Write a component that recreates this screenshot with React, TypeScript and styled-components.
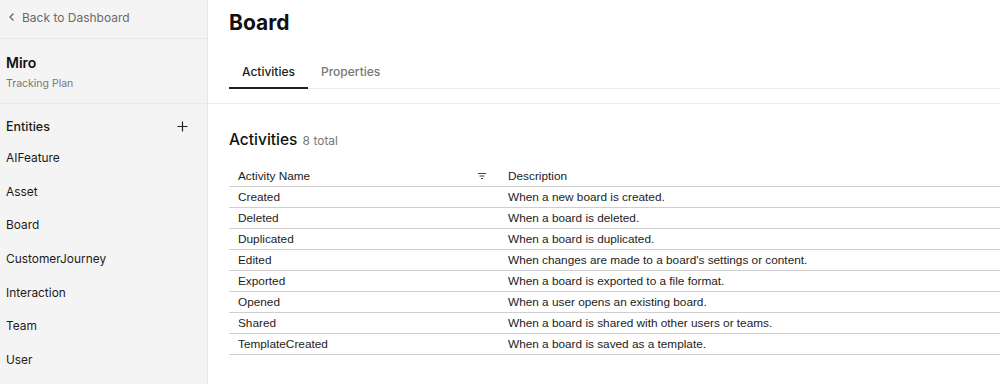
import { createGlobalStyle } from 'styled-components';
import styled from 'styled-components';

const entities = ['AIFeature', 'Asset', 'Board', 'CustomerJourney', 'Interaction', 'Team', 'User'];

const activities = [
    { name: 'Created', description: 'When a new board is created.' },
    { name: 'Deleted', description: 'When a board is deleted.' },
    { name: 'Duplicated', description: 'When a board is duplicated.' },
    { name: 'Edited', description: "When changes are made to a board's settings or content." },
    { name: 'Exported', description: 'When a board is exported to a file format.' },
    { name: 'Opened', description: 'When a user opens an existing board.' },
    { name: 'Shared', description: 'When a board is shared with other users or teams.' },
    { name: 'TemplateCreated', description: 'When a board is saved as a template.' },
];

const App = () => {
    return (
        <>
            <GlobalStyle />
            <Page>
                <Sidebar>
                    <BackLink>
                        <svg width="8" height="10" viewBox="0 0 8 10">
                            <path d="M5.5 1.5 L2 5 L5.5 8.5" fill="none" stroke="#666" strokeWidth="1.3" />
                        </svg>
                        Back to Dashboard
                    </BackLink>
                    <Project>
                        <ProjectName>Miro</ProjectName>
                        <ProjectType>Tracking Plan</ProjectType>
                    </Project>
                    <SectionHeader>
                        Entities
                        <svg width="11" height="11" viewBox="0 0 11 11">
                            <path d="M5.5 0.5 V10.5 M0.5 5.5 H10.5" stroke="#222" strokeWidth="1.2" />
                        </svg>
                    </SectionHeader>
                    <EntityList>
                        {entities.map((entity) => (
                            <EntityItem key={entity}>{entity}</EntityItem>
                        ))}
                    </EntityList>
                </Sidebar>

                <Main>
                    <Header>
                        <Title>Board</Title>
                        <Tabs>
                            <Tab $active>Activities</Tab>
                            <Tab>Properties</Tab>
                        </Tabs>
                    </Header>

                    <Content>
                        <SectionTitle>
                            Activities <Count>8 total</Count>
                        </SectionTitle>
                        <Table>
                            <thead>
                                <tr>
                                    <HeadCell $first>
                                        <HeadInner>
                                            Activity Name
                                            <svg width="10" height="8" viewBox="0 0 10 8">
                                                <path d="M1 1.5 H9 M2.5 4 H7.5 M4 6.5 H6" stroke="#444" strokeWidth="1.1" />
                                            </svg>
                                        </HeadInner>
                                    </HeadCell>
                                    <HeadCell>Description</HeadCell>
                                </tr>
                            </thead>
                            <tbody>
                                {activities.map((activity) => (
                                    <tr key={activity.name}>
                                        <Cell>{activity.name}</Cell>
                                        <Cell>{activity.description}</Cell>
                                    </tr>
                                ))}
                            </tbody>
                        </Table>
                    </Content>
                </Main>
            </Page>
        </>
    )
}

const GlobalStyle = createGlobalStyle`
    html, body {
        margin: 0;
        padding: 0;
        background: #ffffff;
    }
    body {
        font-family: Inter, "Noto Sans", sans-serif;
        color: #1c1c1c;
    }
`

const Page = styled.div`
    display: flex;
    width: 1000px;
    height: 384px;
    overflow: hidden;
`

const Sidebar = styled.aside`
    display: flex;
    flex-direction: column;
    width: 207px;
    flex-shrink: 0;
    background-color: #f4f4f4;
    border-right: 1px solid #e6e6e6;
`

const BackLink = styled.div`
    display: flex;
    align-items: center;
    gap: 6px;
    height: 39px;
    padding: 0 0 4px 8px;
    box-sizing: border-box;
    font-size: 12px;
    color: #6a6a6a;
    border-bottom: 1px solid #e8e8e8;
`

const Project = styled.div`
    display: flex;
    flex-direction: column;
    height: 65px;
    box-sizing: border-box;
    padding: 15px 6px 0;
    border-bottom: 1px solid #e8e8e8;
`

const ProjectName = styled.div`
    font-size: 14px;
    font-weight: 600;
    line-height: 18px;
    color: #111;
`

const ProjectType = styled.div`
    margin-top: 5px;
    font-size: 10.5px;
    line-height: 14px;
    color: #777;
`

const SectionHeader = styled.div`
    display: flex;
    align-items: center;
    justify-content: space-between;
    padding: 8px 19px 0 6px;
    height: 37px;
    box-sizing: border-box;
    font-size: 12.5px;
    font-weight: 500;
    line-height: 16px;
    color: #1c1c1c;
`

const EntityList = styled.div`
    display: flex;
    flex-direction: column;
`

const EntityItem = styled.div`
    height: 33.7px;
    line-height: 33.7px;
    padding-left: 6px;
    font-size: 11.9px;
    color: #1c1c1c;
`

const Main = styled.main`
    display: flex;
    flex-direction: column;
    flex: 1;
    min-width: 0;
`

const Header = styled.div`
    padding: 10px 0 14px 21px;
    border-bottom: 1px solid #ececec;
`

const Title = styled.h1`
    margin: 0;
    font-size: 21px;
    font-weight: 700;
    line-height: 26px;
    color: #111;
`

const Tabs = styled.div`
    display: flex;
    margin-top: 20px;
    border-bottom: 1px solid #ececec;
`

const Tab = styled.div<{ $active?: boolean }>`
    padding: 0 13px;
    height: 31px;
    line-height: 31px;
    margin-bottom: -1px;
    font-size: 12px;
    font-weight: 500;
    color: ${(props) => (props.$active ? '#1c1c1c' : '#777')};
    border-bottom: 2px solid ${(props) => (props.$active ? '#222' : 'transparent')};
`

const Content = styled.div`
    padding: 26px 0 0 21px;
`

const SectionTitle = styled.h2`
    margin: 0 0 15px;
    font-size: 15.5px;
    font-weight: 500;
    line-height: 20px;
    color: #111;
`

const Count = styled.span`
    margin-left: 1px;
    font-size: 12px;
    font-weight: 400;
    color: #777;
`

const Table = styled.table`
    width: 100%;
    border-collapse: collapse;
    font-family: "Liberation Sans", Arial, sans-serif;
    font-size: 11.8px;
    color: #1c1c1c;
`

const HeadCell = styled.th<{ $first?: boolean }>`
    width: ${(props) => (props.$first ? '249px' : 'auto')};
    height: 20px;
    padding: 0 ${(props) => (props.$first ? '12px' : '9px')} 0 9px;
    text-align: left;
    font-weight: 400;
    color: #1c1c1c;
    border-bottom: 1px solid #cfcfcf;
`

const HeadInner = styled.div`
    display: flex;
    align-items: center;
    justify-content: space-between;
`

const Cell = styled.td`
    height: 20px;
    padding: 0 9px;
    border-bottom: 1px solid #cfcfcf;
    white-space: nowrap;
`

export default App;
